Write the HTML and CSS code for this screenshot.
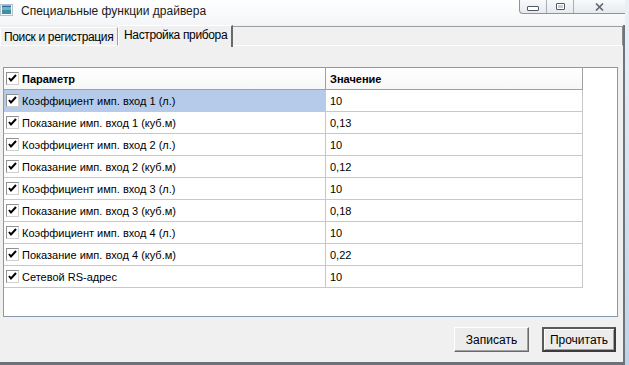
FILE: index.html
```html
<!DOCTYPE html>
<html lang="ru">
<head>
  <meta charset="UTF-8">
  <title>Специальные функции драйвера</title>
  <link rel="stylesheet" href="styles.css">
</head>
<body>
  <div class="window">
    <div class="titlebar">
      <svg class="app-icon" width="13" height="12" viewBox="0 0 13 12">
        <rect x="0.5" y="0.5" width="12" height="11" fill="#f4f6f8" stroke="#b8c0c8"/>
        <rect x="2" y="3" width="9" height="7" fill="#3f8f9e"/>
        <rect x="2" y="3" width="9" height="3" fill="#6fb5c6"/>
        <rect x="2" y="1.5" width="9" height="1.5" fill="#2d6aa8"/>
      </svg>
      <span class="title">Специальные функции драйвера</span>
      <div class="caption-btns">
        <div class="cap-btn min"><span class="min-glyph"></span></div>
        <div class="cap-btn max"><span class="max-glyph"></span></div>
        <div class="cap-btn close">
          <svg width="9" height="8" viewBox="0 0 9 8">
            <path d="M1 0.5 L8 7.5 M8 0.5 L1 7.5" stroke="#5c6570" stroke-width="1.6" fill="none"/>
          </svg>
        </div>
      </div>
    </div>

    <div class="tabs">
      <div class="tab">Поиск и регистрация</div>
      <div class="tab active">Настройка прибора</div>
      <div class="tab-rest"></div>
    </div>

    <div class="page">
      <div class="grid">
        <div class="row head">
          <div class="cell name"><span class="chk"></span>Параметр</div>
          <div class="cell value">Значение</div>
        </div>
        <div class="row">
          <div class="cell name selected"><span class="chk"></span>Коэффициент имп. вход 1 (л.)</div>
          <div class="cell value">10</div>
        </div>
        <div class="row">
          <div class="cell name"><span class="chk"></span>Показание имп. вход 1 (куб.м)</div>
          <div class="cell value">0,13</div>
        </div>
        <div class="row">
          <div class="cell name"><span class="chk"></span>Коэффициент имп. вход 2 (л.)</div>
          <div class="cell value">10</div>
        </div>
        <div class="row">
          <div class="cell name"><span class="chk"></span>Показание имп. вход 2 (куб.м)</div>
          <div class="cell value">0,12</div>
        </div>
        <div class="row">
          <div class="cell name"><span class="chk"></span>Коэффициент имп. вход 3 (л.)</div>
          <div class="cell value">10</div>
        </div>
        <div class="row">
          <div class="cell name"><span class="chk"></span>Показание имп. вход 3 (куб.м)</div>
          <div class="cell value">0,18</div>
        </div>
        <div class="row">
          <div class="cell name"><span class="chk"></span>Коэффициент имп. вход 4 (л.)</div>
          <div class="cell value">10</div>
        </div>
        <div class="row">
          <div class="cell name"><span class="chk"></span>Показание имп. вход 4 (куб.м)</div>
          <div class="cell value">0,22</div>
        </div>
        <div class="row">
          <div class="cell name"><span class="chk"></span>Сетевой RS-адрес</div>
          <div class="cell value">10</div>
        </div>
      </div>

      <div class="actions">
        <button class="btn">Записать</button>
        <button class="btn default">Прочитать</button>
      </div>
    </div>
  </div>
</body>
</html>
```

FILE: styles.css
```css
html, body {
  margin: 0;
  padding: 0;
}
body {
  width: 629px;
  height: 365px;
  overflow: hidden;
  font-family: "Liberation Sans", Arial, sans-serif;
  background: linear-gradient(180deg, #e9f1f8 0%, #bcd4ea 100%);
}
.window {
  width: 623px;
  height: 362px;
  border-right: 2px solid #6f747a;
  border-bottom: 3px solid #6e7278;
  background-color: #f0f0f0;
  display: flex;
  flex-direction: column;
}

/* title bar */
.titlebar {
  height: 25px;
  flex: none;
  display: flex;
  align-items: flex-start;
  background: linear-gradient(180deg, #ffffff 0%, #f3f5f8 100%);
  margin-right: -2px;
}
.app-icon { margin: 4px 0 0 0; }
.title {
  font-size: 12px;
  color: #1a1a1a;
  margin: 4px 0 0 8px;
}
.caption-btns {
  margin-left: auto;
  display: flex;
  height: 13px;
  border: 1px solid #8d949c;
  border-top: none;
  border-right: none;
  border-radius: 0 0 0 4px;
  background: linear-gradient(180deg, #f8f9fb 0%, #e6eaef 100%);
}
.cap-btn {
  display: flex;
  align-items: center;
  justify-content: center;
  border-right: 1px solid #a9b0b8;
}
.cap-btn.min { width: 26px; }
.cap-btn.max { width: 26px; }
.cap-btn.close { width: 51px; border-right: none; }
.min-glyph {
  width: 10px;
  height: 3px;
  margin-top: 3px;
  border: 1px solid #4f5863;
  border-radius: 1px;
  background: #fff;
}
.max-glyph {
  width: 7px;
  height: 5px;
  border: 1px solid #4f5863;
  box-shadow: inset 0 0 0 1px #fff;
  background: #c7ced6;
  border-radius: 1px;
}

/* tabs */
.tabs {
  height: 21px;
  flex: none;
  display: flex;
  align-items: flex-end;
}
.tab {
  flex: none;
  font-size: 12px;
  letter-spacing: -0.35px;
  white-space: nowrap;
  color: #000;
  box-sizing: border-box;
  border-top: 1px solid #ffffff;
  border-left: 1px solid #ffffff;
  border-right: 1px solid #a0a0a0;
  border-bottom: 1px solid #ffffff;
  padding: 0 0 0 3px;
}
.tab:first-child {
  width: 118px;
  height: 19px;
  line-height: 17px;
  padding-top: 1px;
}
.tab.active {
  width: 115px;
  height: 22px;
  line-height: 18px;
  padding-left: 5px;
  border-bottom: none;
  border-right: 2px solid #696969;
  margin-bottom: -1px;
  background: #f0f0f0;
  position: relative;
  z-index: 1;
}
.tab-rest {
  flex: 1;
  align-self: stretch;
  border-top: 1px solid #a0a0a0;
  border-right: 1px solid #8a8a8a;
  border-bottom: 1px solid #ffffff;
  margin-top: 1px;
}

/* page */
.page {
  flex: 1;
  display: flex;
  flex-direction: column;
}
.grid {
  margin: 21px 0 0 3px;
  width: 615px;
  height: 250px;
  box-sizing: border-box;
  border: 1px solid #8799ad;
  background: #ffffff;
}
.row {
  display: grid;
  grid-template-columns: 322px 257px;
  height: 22px;
}
.cell {
  box-sizing: border-box;
  display: flex;
  align-items: center;
  font-size: 11px;
  color: #000;
  border-right: 1px solid #c8c8c8;
  border-bottom: 1px solid #c8c8c8;
  white-space: nowrap;
}
.cell.name { padding-left: 2px; }
.cell.value { padding-left: 4px; }
.cell.selected { background: #b6cbea; }
.head .cell {
  font-weight: bold;
  background: linear-gradient(180deg, #ffffff 0%, #f7f7f7 100%);
  border-right-color: #a0a0a0;
  border-bottom-color: #a0a0a0;
}
.chk {
  width: 13px;
  height: 13px;
  box-sizing: border-box;
  border: 1px solid #8e8f8f;
  border-right-color: #d0d0d0;
  border-bottom-color: #d0d0d0;
  background: #fff url("data:image/svg+xml,%3Csvg xmlns='http://www.w3.org/2000/svg' width='11' height='11'%3E%3Cpath d='M2 5 L4 7.5 L9 2' stroke='%23000' stroke-width='2' fill='none'/%3E%3C/svg%3E") no-repeat center;
  margin-right: 3px;
  flex: none;
}

/* buttons */
.actions {
  display: flex;
  justify-content: flex-end;
  gap: 13px;
  margin: 10px 7px 0 0;
}
.btn {
  font-family: "Liberation Sans", Arial, sans-serif;
  font-size: 12px;
  color: #000;
  width: 75px;
  height: 25px;
  padding: 0;
  background: #ececec;
  border: 1px solid;
  border-color: #ffffff #696969 #696969 #ffffff;
  box-shadow: inset -1px -1px 0 #a0a0a0;
}
.btn.default {
  width: 74px;
  border: 2px solid;
  border-color: #5a5a5a #3c3c3c #3c3c3c #5a5a5a;
  box-shadow: inset 1px 1px 0 #ffffff, inset -1px -1px 0 #a0a0a0;
}
```
